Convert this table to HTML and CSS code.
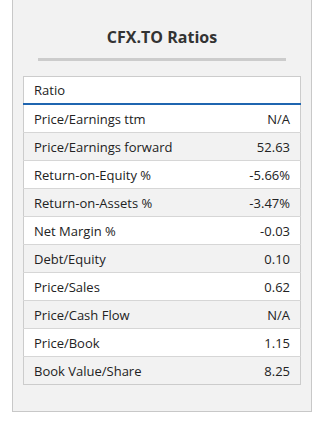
FILE: index.html
```html
<!DOCTYPE html>
<html>
<head>
<meta charset="utf-8">
<link rel="stylesheet" href="styles.css">
</head>
<body>
<div class="panel">
  <h2 class="title">CFX.TO Ratios</h2>
  <div class="rule"></div>
  <table class="ratios">
    <thead>
      <tr><th colspan="2">Ratio</th></tr>
    </thead>
    <tbody>
      <tr><td>Price/Earnings ttm</td><td class="val">N/A</td></tr>
      <tr><td>Price/Earnings forward</td><td class="val">52.63</td></tr>
      <tr><td>Return-on-Equity %</td><td class="val">-5.66%</td></tr>
      <tr><td>Return-on-Assets %</td><td class="val">-3.47%</td></tr>
      <tr><td>Net Margin %</td><td class="val">-0.03</td></tr>
      <tr><td>Debt/Equity</td><td class="val">0.10</td></tr>
      <tr><td>Price/Sales</td><td class="val">0.62</td></tr>
      <tr><td>Price/Cash Flow</td><td class="val">N/A</td></tr>
      <tr><td>Price/Book</td><td class="val">1.15</td></tr>
      <tr><td>Book Value/Share</td><td class="val">8.25</td></tr>
    </tbody>
  </table>
</div>
</body>
</html>
```
FILE: styles.css
```css
html, body {
  margin: 0;
  padding: 0;
  background: #fff;
}
body {
  font-family: "Open Sans", "Liberation Sans", sans-serif;
  color: #222;
}
.panel {
  box-sizing: border-box;
  width: 300px;
  height: 412px;
  margin-left: 12px;
  background: #f2f2f2;
  border: 1px solid #c8c8c8;
  border-top: none;
  padding: 0 10px;
}
.title {
  margin: 0;
  padding-top: 27px;
  height: 24px;
  line-height: 20px;
  font-size: 16px;
  font-weight: 700;
  text-align: center;
  color: #333;
}
.rule {
  height: 3px;
  background: #cccccc;
  margin: 7px 15px 0 15px;
}
.ratios {
  margin-top: 15px;
  width: 100%;
  border-collapse: collapse;
  font-size: 13px;
  line-height: 18px;
  border: 1px solid #cccccc;
}
.ratios th {
  text-align: left;
  font-weight: 400;
  background: #fff;
  height: 26px;
  padding: 0 10px;
  border-bottom: 2px solid #1f65b0;
}
.ratios td {
  height: 27px;
  padding: 0 10px;
  border-top: 1px solid #d6d6d6;
}
.ratios tbody tr:nth-child(odd) td {
  background: #fff;
}
.ratios tbody tr:nth-child(even) td {
  background: #f2f2f2;
}
.ratios .val {
  text-align: right;
}
```
